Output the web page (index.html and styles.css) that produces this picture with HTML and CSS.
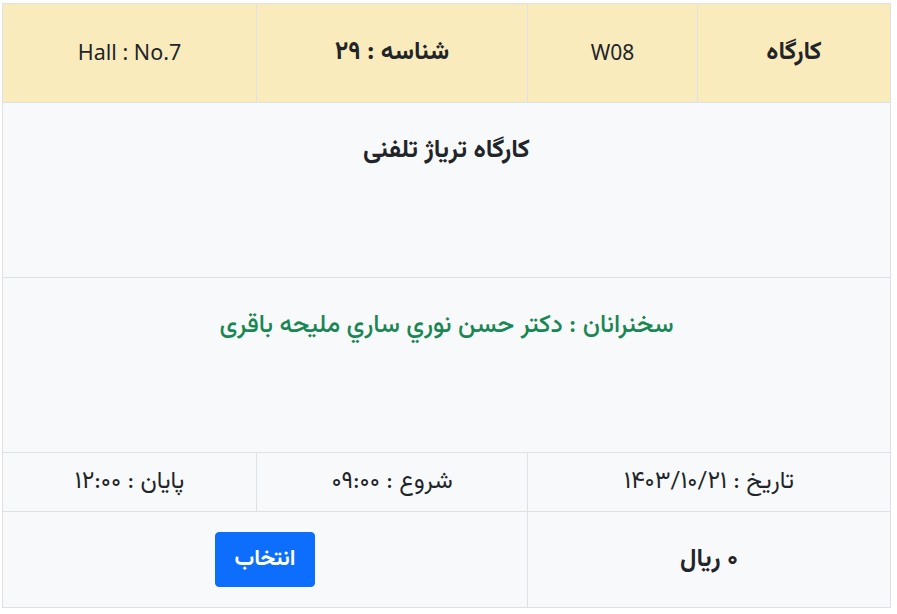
FILE: index.html
```html
<!DOCTYPE html>
<html lang="fa" dir="rtl">
<head>
<meta charset="utf-8">
<link rel="stylesheet" href="styles.css">
</head>
<body>
<div class="wrap">
<table class="card">
  <colgroup>
    <col class="c-a"><col class="c-b"><col class="c-c"><col class="c-d">
  </colgroup>
  <tr class="head">
    <td class="bold">کارگاه</td>
    <td><span class="lat">W08</span></td>
    <td class="bold">شناسه : ۲۹</td>
    <td dir="ltr"><span class="lat hall">Hall : No.7</span></td>
  </tr>
  <tr class="tall">
    <td colspan="4" class="bold title">کارگاه ترياژ تلفنی</td>
  </tr>
  <tr class="tall">
    <td colspan="4" class="green">سخنرانان : دکتر حسن نوري ساري مليحه باقری</td>
  </tr>
  <tr class="time">
    <td colspan="2">تاریخ : ۱۴۰۳/۱۰/۲۱</td>
    <td>شروع : ۰۹:۰۰</td>
    <td>پایان : ۱۲:۰۰</td>
  </tr>
  <tr class="foot">
    <td colspan="2" class="bold">۰ ریال</td>
    <td colspan="2"><button class="btn">انتخاب</button></td>
  </tr>
</table>
</div>
</body>
</html>
```

FILE: styles.css
```css
html, body {
  margin: 0;
  padding: 0;
  background: #ffffff;
}
body {
  font-family: "Vazirmatn", "Noto Sans", sans-serif;
  font-size: 25px;
  line-height: 30px;
  color: #212529;
}
.wrap {
  padding: 3px 6px 3px 3px;
}
.card {
  width: 888px;
  table-layout: fixed;
  border-collapse: collapse;
  background: #f8f9fa;
}
.c-a { width: 193px; }
.c-b { width: 170px; }
.c-c { width: 271px; }
.c-d { width: 254px; }
.card td {
  border: 1px solid #dee2e6;
  text-align: center;
  padding: 0 8px;
}
.lat {
  font-family: "Noto Sans", "Open Sans", sans-serif;
  font-size: 21px;
}
.hall {
  font-size: 21.5px;
}
.head td {
  background: #faebbd;
  height: 98px;
  vertical-align: middle;
}
.tall td {
  height: 175px;
  vertical-align: top;
  padding-top: 33px;
  box-sizing: border-box;
}
.title {
  font-size: 25.5px;
}
.time td {
  height: 58px;
  vertical-align: middle;
  font-size: 24px;
}
.foot td {
  height: 95px;
  vertical-align: middle;
}
.bold { font-weight: 700; }
.green { color: #198754; font-weight: 500; }
.btn {
  font-family: inherit;
  font-size: 22px;
  line-height: 31px;
  font-weight: 700;
  color: #fff;
  background: #0d6efd;
  border: 1px solid #0d6efd;
  border-radius: 4px;
  padding: 11px 19px;
  cursor: pointer;
}
```
